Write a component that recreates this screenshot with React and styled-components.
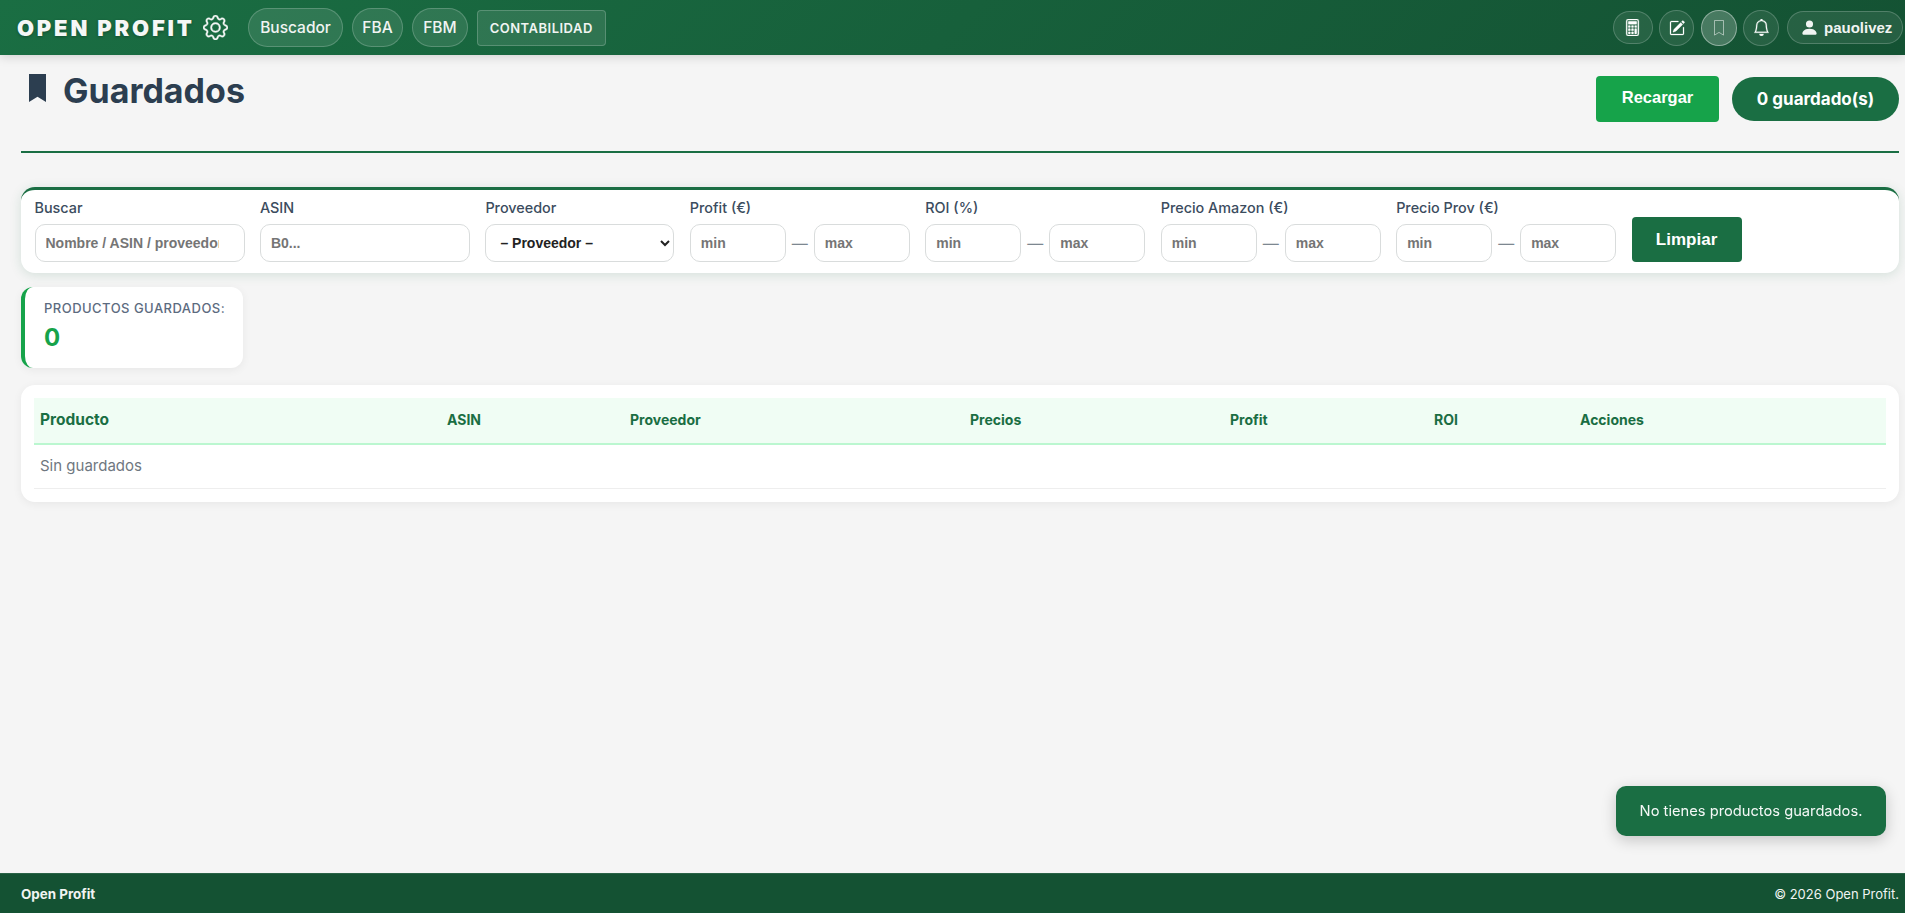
import React from "react";
import styled, { createGlobalStyle } from "styled-components";
import { BsGear, BsCalculator, BsPencilSquare, BsBell, BsPersonFill } from "react-icons/bs";

const FONT = `"Inter", "Noto Sans", sans-serif`;
const ARIAL = `"Liberation Sans", Arial, sans-serif`;

const Global = createGlobalStyle`
  * { box-sizing: border-box; }
  html, body { margin: 0; padding: 0; height: 100%; }
  body { background: #f5f5f5; font-family: ${FONT}; color: #2c3e50; }
`;

const Page = styled.div`
  min-height: 100vh;
  display: flex;
  flex-direction: column;
`;

const Header = styled.header`
  height: 55px;
  flex: none;
  display: flex;
  align-items: center;
  justify-content: space-between;
  padding: 0 2px 0 17px;
  background: linear-gradient(135deg, #1a6e43 0%, #145233 100%);
  box-shadow: 0 2px 10px rgba(0, 0, 0, 0.15);
  color: #fff;
`;

const Side = styled.div`
  display: flex;
  align-items: center;
`;

const Logo = styled.span`
  font-family: ${FONT};
  font-weight: 900;
  font-size: 22px;
  letter-spacing: 2.8px;
  white-space: nowrap;
  color: #f5f7f6;
  text-shadow: 0 1px 3px rgba(0, 0, 0, 0.3);
`;

const GearWrap = styled.span`
  display: flex;
  margin: 0 20px 0 8.5px;
  font-size: 25px;
  color: #f5f7f6;
  svg { stroke: currentColor; stroke-width: 0.25; }
`;

const NavPill = styled.a`
  height: 39px;
  display: flex;
  align-items: center;
  padding: 0 ${(p) => p.$pad}px;
  margin-right: 9px;
  border-radius: 20px;
  font-size: 15.5px;
  font-weight: 500;
  color: #f0f4f2;
  background: rgba(255, 255, 255, 0.1);
  border: 1px solid rgba(255, 255, 255, 0.2);
`;

const NavBox = styled.a`
  height: 36px;
  display: flex;
  align-items: center;
  padding: 0 12px;
  border-radius: 4px;
  font-size: 13px;
  font-weight: 600;
  letter-spacing: 0.5px;
  color: #f0f4f2;
  background: rgba(255, 255, 255, 0.1);
  border: 1px solid rgba(255, 255, 255, 0.2);
`;

const IconBtn = styled.span`
  width: ${(p) => p.$w}px;
  height: ${(p) => p.$h}px;
  display: flex;
  align-items: center;
  justify-content: center;
  margin-right: 6.5px;
  border-radius: 20px;
  color: ${(p) => (p.$active ? "rgba(255,255,255,0.5)" : "#fff")};
  background: rgba(255, 255, 255, ${(p) => (p.$active ? 0.22 : 0.08)});
  border: 1px solid rgba(255, 255, 255, ${(p) => (p.$active ? 0.4 : 0.2)});
  svg { stroke: currentColor; stroke-width: 0.25; }
`;

const UserPill = styled.span`
  width: 116px;
  height: 33px;
  display: flex;
  align-items: center;
  gap: 5px;
  padding-left: 12px;
  margin-left: 1.5px;
  border-radius: 20px;
  font-family: ${ARIAL};
  font-weight: 700;
  font-size: 15px;
  color: #f0f4f2;
  background: rgba(255, 255, 255, 0.08);
  border: 1px solid rgba(255, 255, 255, 0.2);
`;

const Main = styled.main`
  flex: 1;
  padding: 0 6px 0 21px;
`;

const TitleBar = styled.div`
  height: 98px;
  display: flex;
  justify-content: space-between;
  align-items: flex-start;
  border-bottom: 2px solid #1a6e43;
`;

const Title = styled.h1`
  margin: 16px 0 0 8px;
  display: flex;
  align-items: flex-start;
  gap: 17px;
  font-size: 34px;
  line-height: 40px;
  font-weight: 700;
  color: #2c3e50;
`;

const TitleIcon = styled.span`
  display: flex;
  margin-top: 3px;
`;

const TitleActions = styled.div`
  display: flex;
  align-items: center;
  gap: 13px;
  margin-top: 21px;
`;

const Reload = styled.button`
  width: 123px;
  height: 46px;
  padding: 0 0 3px;
  border: 0;
  border-radius: 4px;
  background: #16a34a;
  color: #fff;
  font-family: ${ARIAL};
  font-weight: 700;
  font-size: 16.5px;
`;

const CountPill = styled.span`
  width: 167px;
  height: 44px;
  display: flex;
  align-items: center;
  justify-content: center;
  border-radius: 22px;
  background: #1a6e43;
  color: #fff;
  font-weight: 700;
  font-size: 17px;
`;

const FilterCard = styled.section`
  margin-top: 34px;
  height: 86px;
  padding: 6px 12px 0 13.5px;
  display: flex;
  gap: 15.45px;
  background: #fff;
  border-top: 3px solid #1a6e43;
  border-radius: 14px;
  box-shadow: 0 2px 12px rgba(26, 110, 67, 0.15);
`;

const Field = styled.div`
  width: ${(p) => p.$w}px;
  flex: none;
`;

const Label = styled.label`
  display: block;
  height: 24px;
  margin-bottom: 4px;
  font-size: 14.4px;
  line-height: 24px;
  font-weight: 500;
  color: #3b4c5e;
  white-space: nowrap;
`;

const inputCss = `
  height: 38px;
  border: 1px solid #d9dcdc;
  border-radius: 10px;
  background: #fff;
  font-family: ${ARIAL};
  font-weight: 700;
  font-size: 14px;
  outline: none;
`;

const TextInput = styled.input`
  ${inputCss}
  width: 100%;
  min-width: 0;
  padding: 0 ${(p) => p.$padRight || 9}px 0 10px;
  &::placeholder { color: #757575; opacity: 1; }
`;

const Select = styled.select`
  ${inputCss}
  width: 100%;
  padding: 0 10px;
  color: #222;
`;

const Range = styled.div`
  display: flex;
  align-items: center;
`;

const Dash = styled.span`
  width: 28px;
  flex: none;
  text-align: center;
  font-size: 16px;
  color: #7d8790;
`;

const Clear = styled.button`
  width: 110px;
  height: 45px;
  margin-top: 21px;
  flex: none;
  border: 0;
  border-radius: 4px;
  background: #1a6e43;
  color: #fff;
  font-family: ${ARIAL};
  font-weight: 700;
  font-size: 17px;
`;

const Stat = styled.div`
  width: 222px;
  height: 81px;
  margin-top: 14px;
  padding: 12px 0 0 19px;
  background: #fff;
  border-left: 4px solid #16a34a;
  border-radius: 12px;
  box-shadow: 0 2px 10px rgba(0, 0, 0, 0.06);
`;

const StatLabel = styled.div`
  font-size: 13px;
  line-height: 18px;
  font-weight: 500;
  letter-spacing: 0.47px;
  color: #5c6b7f;
  white-space: nowrap;
`;

const StatValue = styled.div`
  margin-top: 7px;
  font-size: 24px;
  line-height: 28px;
  font-weight: 700;
  color: #16a34a;
`;

const TableCard = styled.section`
  margin-top: 17px;
  padding: 13px;
  background: #fff;
  border-radius: 14px;
  box-shadow: 0 2px 10px rgba(0, 0, 0, 0.06);
`;

const Table = styled.table`
  width: 100%;
  table-layout: fixed;
  border-collapse: collapse;
`;

const Th = styled.th`
  width: ${(p) => p.$w}px;
  height: 46px;
  padding: 0 6px 2px;
  text-align: left;
  background: #f0fdf4;
  border-bottom: 2px solid #bbf7d0;
  font-size: ${(p) => (p.$big ? 15.5 : 14)}px;
  font-weight: 700;
  color: #1a6e43;
`;

const Td = styled.td`
  height: 44px;
  padding: 0 6px 2px;
  border-bottom: 1px solid #eeeeee;
  font-size: 15px;
  color: #6f7780;
`;

const Toast = styled.div`
  position: fixed;
  right: 19px;
  bottom: 77px;
  width: 270px;
  height: 50px;
  display: flex;
  align-items: center;
  justify-content: center;
  border-radius: 10px;
  background: #1a6e43;
  color: #f4f8f6;
  font-size: 14.7px;
  box-shadow: 0 4px 15px rgba(0, 0, 0, 0.2);
`;

const Footer = styled.footer`
  height: 40px;
  flex: none;
  display: flex;
  align-items: center;
  justify-content: space-between;
  padding: 0 6px 0 21px;
  background: #145233;
  border-top: 1px solid #2a6347;
  color: #f0f4f2;
  font-size: 13px;
`;

const FooterBrand = styled.strong`
  font-size: 13.4px;
  font-weight: 700;
`;

const BookmarkGlyph = ({ w, h, filled }) => (
  <svg width={w} height={h} viewBox="0 0 10 16" preserveAspectRatio="none" aria-hidden="true">
    <path
      d={filled ? "M0 0h10v16L5 13 0 16z" : "M.5.5h9v14.6L5 12.4.5 15.1z"}
      fill={filled ? "currentColor" : "none"}
      stroke={filled ? "none" : "currentColor"}
      strokeWidth="1"
    />
  </svg>
);

const RangeField = ({ label }) => (
  <Field $w={220}>
    <Label>{label}</Label>
    <Range>
      <TextInput placeholder="min" />
      <Dash>—</Dash>
      <TextInput placeholder="max" />
    </Range>
  </Field>
);

export default function App() {
  return (
    <Page>
      <Global />
      <Header>
        <Side>
          <Logo>OPEN PROFIT</Logo>
          <GearWrap><BsGear /></GearWrap>
          <NavPill $pad={11}>Buscador</NavPill>
          <NavPill $pad={9.5}>FBA</NavPill>
          <NavPill $pad={10}>FBM</NavPill>
          <NavBox>CONTABILIDAD</NavBox>
        </Side>
        <Side>
          <IconBtn $w={40} $h={33}><BsCalculator size={17} /></IconBtn>
          <IconBtn $w={35} $h={36}><BsPencilSquare size={16} /></IconBtn>
          <IconBtn $w={36} $h={36} $active><BookmarkGlyph w={10} h={16} /></IconBtn>
          <IconBtn $w={36} $h={36}><BsBell size={17} /></IconBtn>
          <UserPill><BsPersonFill size={19} />pauolivez</UserPill>
        </Side>
      </Header>
      <Main>
        <TitleBar>
          <Title><TitleIcon><BookmarkGlyph w={17} h={28} filled /></TitleIcon>Guardados</Title>
          <TitleActions>
            <Reload>Recargar</Reload>
            <CountPill>0 guardado(s)</CountPill>
          </TitleActions>
        </TitleBar>
        <FilterCard>
          <Field $w={210}><Label>Buscar</Label><TextInput $padRight={25} placeholder="Nombre / ASIN / proveedor" /></Field>
          <Field $w={210}><Label>ASIN</Label><TextInput placeholder="B0..." /></Field>
          <Field $w={189}>
            <Label>Proveedor</Label>
            <Select defaultValue=""><option value="">– Proveedor –</option></Select>
          </Field>
          <RangeField label="Profit (€)" />
          <RangeField label="ROI (%)" />
          <RangeField label="Precio Amazon (€)" />
          <RangeField label="Precio Prov (€)" />
          <Clear>Limpiar</Clear>
        </FilterCard>
        <Stat>
          <StatLabel>PRODUCTOS GUARDADOS:</StatLabel>
          <StatValue>0</StatValue>
        </Stat>
        <TableCard>
          <Table>
            <thead>
              <tr>
                <Th $w={407} $big>Producto</Th>
                <Th $w={183}>ASIN</Th>
                <Th $w={340}>Proveedor</Th>
                <Th $w={260}>Precios</Th>
                <Th $w={204}>Profit</Th>
                <Th $w={146}>ROI</Th>
                <Th>Acciones</Th>
              </tr>
            </thead>
            <tbody>
              <tr><Td colSpan={7}>Sin guardados</Td></tr>
            </tbody>
          </Table>
        </TableCard>
      </Main>
      <Toast>No tienes productos guardados.</Toast>
      <Footer>
        <FooterBrand>Open Profit</FooterBrand>
        <span>© 2026 Open Profit.</span>
      </Footer>
    </Page>
  );
}
